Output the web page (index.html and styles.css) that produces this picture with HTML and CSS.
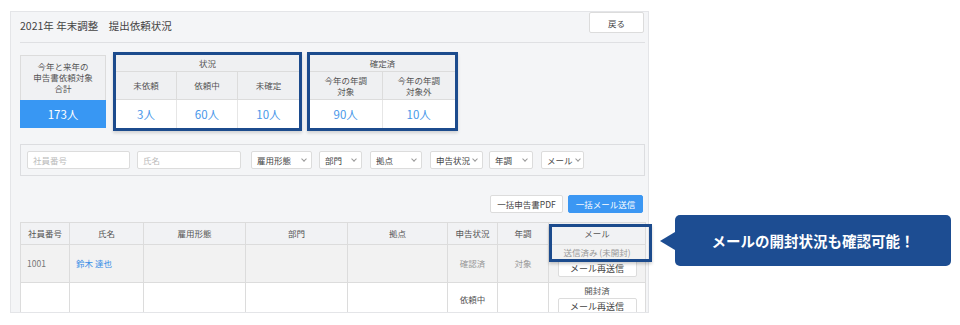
FILE: index.html
```html
<!DOCTYPE html>
<html lang="ja">

<head>
    <meta charset="UTF-8">
    <title>2021年 年末調整 提出依頼状況</title>
    <link rel="stylesheet" href="styles.css">
</head>

<body>
    <div class="page">
        <div class="panel">
            <div class="head">
                <h1>2021年 年末調整　提出依頼状況</h1>
                <button class="btn back">戻る</button>
            </div>

            <div class="summary">
                <div class="total">
                    <div class="total-head">今年と来年の<br>申告書依頼対象<br>合計</div>
                    <div class="total-val">173人</div>
                </div>
                <div class="group g3">
                    <div class="gh">状況</div>
                    <div class="sub">未依頼</div>
                    <div class="sub">依頼中</div>
                    <div class="sub last">未確定</div>
                    <div class="val">3人</div>
                    <div class="val">60人</div>
                    <div class="val last">10人</div>
                </div>
                <div class="group g2">
                    <div class="gh">確定済</div>
                    <div class="sub two">今年の年調<br>対象</div>
                    <div class="sub two last">今年の年調<br>対象外</div>
                    <div class="val">90人</div>
                    <div class="val last">10人</div>
                </div>
            </div>

            <div class="filters">
                <div class="field w1">社員番号</div>
                <div class="field w2">氏名</div>
                <div class="select s1 wide-gap">雇用形態<span class="chev"></span></div>
                <div class="select s2">部門<span class="chev"></span></div>
                <div class="select s3">拠点<span class="chev"></span></div>
                <div class="select s4">申告状況<span class="chev"></span></div>
                <div class="select s5">年調<span class="chev"></span></div>
                <div class="select s6">メール<span class="chev"></span></div>
            </div>

            <div class="actions">
                <button class="btn">一括申告書PDF</button>
                <button class="btn primary">一括メール送信</button>
            </div>

            <table class="list">
                <colgroup>
                    <col style="width:49px">
                    <col style="width:74px">
                    <col style="width:102px">
                    <col style="width:102px">
                    <col style="width:100px">
                    <col style="width:50px">
                    <col style="width:51px">
                    <col style="width:97px">
                </colgroup>
                <thead>
                    <tr>
                        <th>社員番号</th>
                        <th>氏名</th>
                        <th>雇用形態</th>
                        <th>部門</th>
                        <th>拠点</th>
                        <th>申告状況</th>
                        <th>年調</th>
                        <th>メール</th>
                    </tr>
                </thead>
                <tbody>
                    <tr class="shade">
                        <td class="num">1001</td>
                        <td class="name"><a href="#">鈴木 達也</a></td>
                        <td></td>
                        <td></td>
                        <td></td>
                        <td class="muted">確認済</td>
                        <td class="muted">対象</td>
                        <td class="mail">
                            <div class="mail-state">送信済み (未開封)</div>
                            <button class="btn resend">メール再送信</button>
                        </td>
                    </tr>
                    <tr>
                        <td></td>
                        <td></td>
                        <td></td>
                        <td></td>
                        <td></td>
                        <td class="dark">依頼中</td>
                        <td></td>
                        <td class="mail">
                            <div class="mail-state dark">開封済</div>
                            <button class="btn resend">メール再送信</button>
                        </td>
                    </tr>
                </tbody>
            </table>
        </div>

        <!-- highlight over the mail column -->
        <div class="mark"></div>

        <div class="callout">メールの開封状況も確認可能！</div>
    </div>
</body>

</html>
```

FILE: styles.css
```css
body {
    margin: 0;
    background: #fff;
    color: #555;
    font-family: "Noto Sans CJK JP", "Noto Sans", sans-serif;
    font-size: 9px;
}

.page {
    position: relative;
    width: 960px;
    height: 325px;
    overflow: hidden;
}

.panel {
    box-sizing: border-box;
    width: 639px;
    height: 302px;
    margin: 11px 0 0 10px;
    padding: 0 3px 0 9px;
    background: #f4f5f7;
    border: 1px solid #e4e5e8;
    overflow: hidden;
}

.head {
    display: flex;
    justify-content: space-between;
    align-items: flex-start;
    height: 30px;
    border-bottom: 1px solid #dfe0e3;
}

h1 {
    margin: 0;
    font-size: 10.5px;
    font-weight: normal;
    line-height: 27px;
    color: #444;
}

.btn {
    box-sizing: border-box;
    height: 18px;
    padding: 0 6px;
    background: #fff;
    border: 1px solid #dcdcdc;
    border-radius: 2px;
    color: #444;
    font-family: inherit;
    font-size: 8.5px;
    line-height: 16px;
    white-space: nowrap;
}

.back {
    width: 55px;
    height: 21px;
    margin-right: 1px;
}

.btn.primary {
    background: #3b97f3;
    border-color: #3b97f3;
    color: #fff;
}

/* summary blocks */
.summary {
    display: flex;
    align-items: flex-start;
    margin-top: 9px;
}

.total {
    width: 86px;
    margin-top: 3px;
}

.total-head {
    box-sizing: border-box;
    height: 45px;
    padding-top: 5px;
    background: #f0f1f3;
    border: 1px solid #dcdcdc;
    border-bottom: 0;
    text-align: center;
    font-size: 8.5px;
    line-height: 11px;
}

.total-val {
    height: 28px;
    background: #3897f3;
    color: #fff;
    font-size: 11.5px;
    line-height: 28px;
    text-align: center;
}

.group {
    display: grid;
    grid-template-rows: 17px 28px 28px;
    border: 3px solid #1c4b8d;
    background: #fff;
    box-shadow: 0 2px 3px rgba(0, 0, 0, 0.15);
}

.g3 {
    width: 183px;
    margin-left: 7px;
    grid-template-columns: repeat(3, 1fr);
}

.g2 {
    width: 145px;
    margin-left: 5px;
    grid-template-columns: repeat(2, 1fr);
}

.gh {
    grid-column: 1 / -1;
    background: #eff0f2;
    border-bottom: 1px solid #dcdcdc;
    text-align: center;
    font-size: 8.5px;
    line-height: 16px;
}

.sub {
    display: flex;
    align-items: center;
    justify-content: center;
    background: #eff0f2;
    border-right: 1px solid #dcdcdc;
    border-bottom: 1px solid #dcdcdc;
    text-align: center;
    font-size: 8.5px;
    line-height: 11px;
}

.val {
    border-right: 1px solid #e6e6e6;
    color: #4a97e9;
    font-size: 11.5px;
    line-height: 28px;
    text-align: center;
}

.last {
    border-right: 0;
}

/* filters */
.filters {
    display: flex;
    gap: 7px;
    box-sizing: border-box;
    height: 32px;
    margin-top: 13px;
    padding: 6px 6px 0;
    border: 1px solid #dcdde0;
}

.field,
.select {
    box-sizing: border-box;
    height: 18px;
    background: #fff;
    border: 1px solid #dcdcdc;
    border-radius: 2px;
    padding: 0 4px 0 5px;
    font-size: 8.5px;
    line-height: 16px;
    white-space: nowrap;
}

.field {
    color: #bbb;
}

.select {
    display: flex;
    justify-content: space-between;
    align-items: center;
    color: #444;
}

.chev {
    flex: none;
    width: 3px;
    height: 3px;
    margin: -2px 1px 0 2px;
    border-right: 1px solid #999;
    border-bottom: 1px solid #999;
    transform: rotate(45deg);
}

.w1 { width: 103px; }
.w2 { width: 104px; }
.s1 { width: 61px; }
.s2 { width: 43px; }
.s3 { width: 52px; margin-left: 1px; }
.s4 { width: 53px; margin-left: 1px; }
.s5 { width: 44px; margin-left: -1px; }
.s6 { width: 43px; margin-left: 1px; }
.s6 .chev { margin-left: 3px; }
.wide-gap { margin-left: 3px; }

/* actions */
.actions {
    display: flex;
    justify-content: flex-end;
    gap: 5px;
    margin: 19px 2px 0 0;
}

.actions .btn {
    width: 73px;
    padding: 0;
}

.actions .primary {
    width: 75px;
}

/* table */
.list {
    width: 625px;
    margin-top: 9px;
    border-collapse: collapse;
    table-layout: fixed;
    background: #fff;
}

.list th,
.list td {
    border: 1px solid #dcdcdc;
    padding: 0;
    text-align: center;
    font-size: 8.5px;
    line-height: 13px;
}

.list th {
    height: 21px;
    background: #f1f2f4;
    font-weight: normal;
    color: #555;
}

.list tr.shade td {
    height: 34px;
    background: #f2f2f2;
}

.list td {
    height: 30px;
}

.list td.num {
    text-align: left;
    padding-left: 6px;
    color: #777;
}

.list td.name {
    text-align: left;
    padding-left: 6px;
}

.list a {
    color: #3a8ee6;
    text-decoration: none;
}

.muted {
    color: #999;
}

.dark {
    color: #555;
}

.list td.mail {
    vertical-align: top;
    padding-top: 1px;
}

.list tr.shade td.mail {
    padding-bottom: 2px;
}

.mail-state {
    line-height: 13px;
    color: #999;
}

.mail-state.dark {
    color: #555;
}

.resend {
    display: block;
    width: 79px;
    height: 17px;
    margin: 1px auto 0;
    padding: 0;
    font-size: 9px;
    line-height: 15px;
}

/* highlight and callout */
.mark {
    position: absolute;
    left: 549px;
    top: 224px;
    box-sizing: border-box;
    width: 103px;
    height: 38px;
    border: 3px solid #1c4b8d;
    box-shadow: 0 2px 3px rgba(0, 0, 0, 0.2);
}

.callout {
    position: absolute;
    left: 675px;
    top: 215px;
    width: 276px;
    height: 51px;
    background: #1d4d92;
    border-radius: 5px;
    color: #fff;
    font-size: 14.5px;
    font-weight: bold;
    line-height: 51px;
    text-align: center;
}

.callout::before {
    content: "";
    position: absolute;
    left: -15px;
    top: 17px;
    border-top: 9px solid transparent;
    border-bottom: 9px solid transparent;
    border-right: 15px solid #1d4d92;
}
```
